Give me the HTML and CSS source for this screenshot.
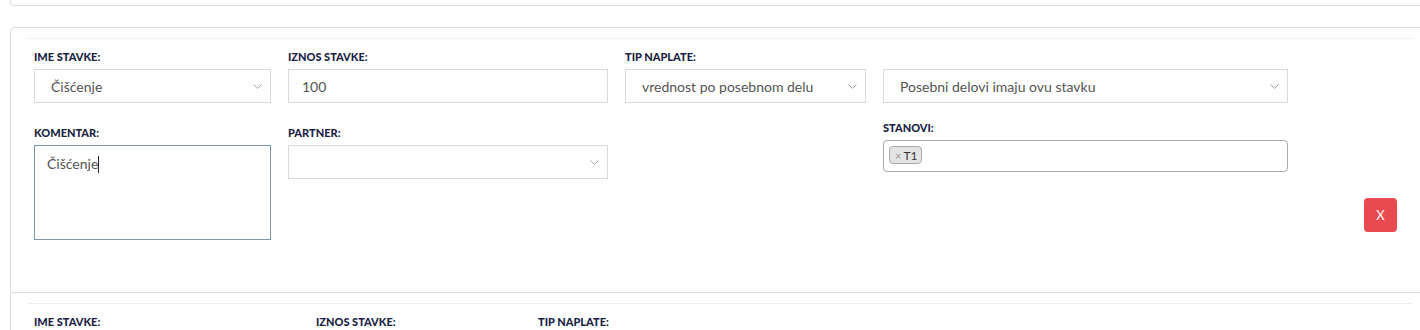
FILE: index.html
```html
<!DOCTYPE html>
<html lang="sr">

<head>
  <meta charset="UTF-8">
  <meta name="viewport" content="width=device-width, initial-scale=1.0">
  <title>Stavke</title>
  <link rel="stylesheet" href="styles.css">
</head>

<body>
  <div class="panel-top"></div>

  <div class="stavka first">
    <div class="stavka-body">
      <div class="row">
        <div class="field col-1">
          <label>Ime stavke:</label>
          <div class="select">
            <span>Čišćenje</span>
            <svg class="chevron" width="9" height="5" viewBox="0 0 9 5"><path d="M0.5 0.5 L4.5 4.5 L8.5 0.5" fill="none" stroke="#999" stroke-width="0.9"/></svg>
          </div>
        </div>
        <div class="field col-2">
          <label>Iznos stavke:</label>
          <div class="input">100</div>
        </div>
        <div class="field col-3">
          <label>Tip naplate:</label>
          <div class="select">
            <span>vrednost po posebnom delu</span>
            <svg class="chevron" width="9" height="5" viewBox="0 0 9 5"><path d="M0.5 0.5 L4.5 4.5 L8.5 0.5" fill="none" stroke="#999" stroke-width="0.9"/></svg>
          </div>
        </div>
        <div class="field col-4">
          <label>&nbsp;</label>
          <div class="select">
            <span>Posebni delovi imaju ovu stavku</span>
            <svg class="chevron" width="9" height="5" viewBox="0 0 9 5"><path d="M0.5 0.5 L4.5 4.5 L8.5 0.5" fill="none" stroke="#999" stroke-width="0.9"/></svg>
          </div>
        </div>
      </div>

      <div class="row row-2">
        <div class="field col-1">
          <label>Komentar:</label>
          <div class="textarea">Čišćenje<span class="caret"></span></div>
        </div>
        <div class="field col-2">
          <label>Partner:</label>
          <div class="select">
            <span></span>
            <svg class="chevron" width="9" height="5" viewBox="0 0 9 5"><path d="M0.5 0.5 L4.5 4.5 L8.5 0.5" fill="none" stroke="#999" stroke-width="0.9"/></svg>
          </div>
        </div>
        <div class="field col-3"></div>
        <div class="field col-4 stanovi">
          <label>Stanovi:</label>
          <div class="multi">
            <span class="tag"><span class="tag-x">×</span>T1</span>
          </div>
        </div>
        <div class="field col-5">
          <button class="btn-remove">X</button>
        </div>
      </div>
    </div>
  </div>

  <div class="stavka">
    <div class="stavka-body">
      <div class="row">
        <div class="field col-a">
          <label>Ime stavke:</label>
          <div class="select">
            <span></span>
            <svg class="chevron" width="9" height="5" viewBox="0 0 9 5"><path d="M0.5 0.5 L4.5 4.5 L8.5 0.5" fill="none" stroke="#999" stroke-width="0.9"/></svg>
          </div>
        </div>
        <div class="field col-b">
          <label>Iznos stavke:</label>
          <div class="input"></div>
        </div>
        <div class="field col-c">
          <label>Tip naplate:</label>
          <div class="select">
            <span></span>
            <svg class="chevron" width="9" height="5" viewBox="0 0 9 5"><path d="M0.5 0.5 L4.5 4.5 L8.5 0.5" fill="none" stroke="#999" stroke-width="0.9"/></svg>
          </div>
        </div>
      </div>
    </div>
  </div>
</body>

</html>
```

FILE: styles.css
```css
* {
  box-sizing: border-box;
  margin: 0;
  padding: 0;
  font-family: Lato, "Noto Sans", sans-serif;
}

html,
body {
  overflow: hidden;
}

body {
  background-color: #fff;
  padding-left: 10px;
  width: 1440px;
}

.panel-top {
  width: 1420px;
  height: 6px;
  border: 1px solid #dcdcdc;
  border-top: none;
  border-radius: 0 0 4px 4px;
  margin-bottom: 21px;
}

.stavka {
  width: 1420px;
  border: 1px solid #dcdcdc;
  border-top: none;
  padding: 10px 16px 0;
}

.stavka.first {
  border-top: 1px solid #dcdcdc;
  border-radius: 4px 4px 0 0;
}

.stavka-body {
  border-top: 1px solid #f0f0f0;
  padding: 10px 7px 52px;
}

.row {
  display: flex;
  gap: 17px;
  align-items: flex-start;
}

.row-2 {
  margin-top: 22px;
}

.col-1 { width: 237px; }
.col-2 { width: 320px; }
.col-3 { width: 241px; }
.col-4 { width: 405px; }
.col-5 {
  width: 92px;
  display: flex;
  justify-content: flex-end;
  padding-top: 73px;
}

.col-a { width: 265px; }
.col-b { width: 205px; }
.col-c { width: 241px; }

.field label {
  display: block;
  font-size: 11px;
  font-weight: 900;
  line-height: 16px;
  text-transform: uppercase;
  color: #1b1f45;
  margin-bottom: 4px;
}

.stanovi {
  margin-top: -5px;
}

.select,
.input {
  height: 34px;
  border: 1px solid #d9d9d9;
  display: flex;
  align-items: center;
  font-size: 14px;
  color: #555;
  background-color: #fff;
}

.select {
  justify-content: space-between;
  padding: 0 8px 0 16px;
}

.input {
  padding: 0 13px;
}

.chevron {
  flex-shrink: 0;
}

.textarea {
  height: 95px;
  border: 1px solid #7b96ad;
  padding: 9px 12px;
  font-size: 14px;
  line-height: 18px;
  color: #555;
}

.caret {
  display: inline-block;
  width: 1px;
  height: 17px;
  background-color: #222;
  vertical-align: -4px;
}

.multi {
  height: 32px;
  border: 1px solid #aaa;
  border-radius: 4px;
  padding: 5px;
  display: flex;
  align-items: flex-start;
}

.tag {
  display: inline-flex;
  align-items: center;
  height: 18px;
  padding: 0 4px 0 5px;
  background-color: #e4e4e4;
  border: 1px solid #aaa;
  border-radius: 4px;
  font-size: 12px;
  color: #333;
}

.tag-x {
  color: #999;
  font-size: 11px;
  margin-right: 2px;
}

.btn-remove {
  width: 33px;
  height: 34px;
  border: none;
  border-radius: 4px;
  background-color: #e84a4f;
  color: #fff;
  font-size: 13px;
  cursor: pointer;
}
```
